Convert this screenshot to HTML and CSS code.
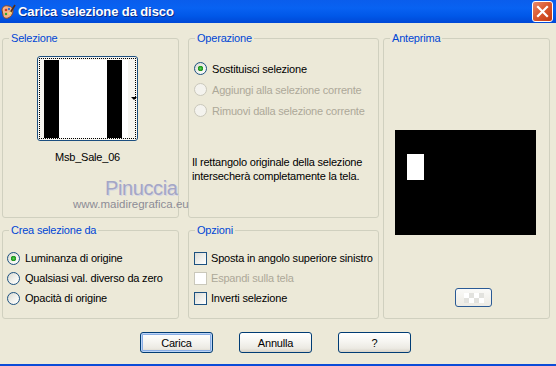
FILE: index.html
```html
<!DOCTYPE html>
<html lang="it">
<head>
    <meta charset="UTF-8">
    <title>Carica selezione da disco</title>
    <link rel="stylesheet" href="styles.css">
</head>
<body>

<div class="window">
    <div class="titlebar">
        <svg class="app-icon" width="16" height="16" viewBox="0 0 16 16">
            <path d="M2 6 C2 3 5 1 8 2 C11 2 13 4 13 7 C13 10 11 13 8 14 C5 15 3 13 3 11 Z" fill="#f2b38a" stroke="#8a4a2a" stroke-width="1"/>
            <circle cx="6" cy="6" r="1.3" fill="#d23b1e"/>
            <circle cx="9" cy="5" r="1.2" fill="#2f6fd6"/>
            <circle cx="6" cy="10" r="1.2" fill="#2da82d"/>
            <path d="M10 9 L15 1" stroke="#5a2d12" stroke-width="1.6"/>
            <path d="M9 10 L11 8" stroke="#f5e06a" stroke-width="2"/>
        </svg>
        <span class="title">Carica selezione da disco</span>
        <span class="close-btn">
            <svg width="13" height="13" viewBox="0 0 13 13">
                <path d="M2 2 L11 11 M11 2 L2 11" stroke="#fff" stroke-width="2.2" stroke-linecap="square"/>
            </svg>
        </span>
    </div>

    <div class="client">
        <div class="groups">
            <fieldset class="group g-sel">
                <legend>Selezione</legend>
                <div class="thumb-btn">
                    <div class="thumb-focus">
                        <div class="thumb-img"></div>
                    </div>
                    <span class="thumb-arrow"></span>
                </div>
                <div class="thumb-name">Msb_Sale_06</div>
            </fieldset>

            <fieldset class="group g-op">
                <legend>Operazione</legend>
                <div class="opt-list">
                    <div class="opt-row"><span class="radio on"></span>Sostituisci selezione</div>
                    <div class="opt-row disabled"><span class="radio"></span>Aggiungi alla selezione corrente</div>
                    <div class="opt-row disabled"><span class="radio"></span>Rimuovi dalla selezione corrente</div>
                </div>
                <p class="note">Il rettangolo originale della selezione intersecherà completamente la tela.</p>
            </fieldset>

            <fieldset class="group g-prev">
                <legend>Anteprima</legend>
                <div class="preview">
                    <span class="preview-sel"></span>
                </div>
                <div class="small-btn"><span class="checker"></span></div>
            </fieldset>

            <fieldset class="group g-crea">
                <legend>Crea selezione da</legend>
                <div class="opt-list tight">
                    <div class="opt-row"><span class="radio on"></span>Luminanza di origine</div>
                    <div class="opt-row"><span class="radio"></span>Qualsiasi val. diverso da zero</div>
                    <div class="opt-row"><span class="radio"></span>Opacità di origine</div>
                </div>
            </fieldset>

            <fieldset class="group g-opz">
                <legend>Opzioni</legend>
                <div class="opt-list tight">
                    <div class="opt-row check"><span class="checkbox"></span>Sposta in angolo superiore sinistro</div>
                    <div class="opt-row check disabled"><span class="checkbox"></span>Espandi sulla tela</div>
                    <div class="opt-row check"><span class="checkbox"></span>Inverti selezione</div>
                </div>
            </fieldset>
        </div>

        <div class="buttons">
            <button class="xp-btn default">Carica</button>
            <button class="xp-btn">Annulla</button>
            <button class="xp-btn">?</button>
        </div>
    </div>

    <div class="watermark">
        <span class="wm-name">Pinuccia</span>
        <span class="wm-url">www.maidiregrafica.eu</span>
    </div>
</div>

</body>
</html>
```

FILE: styles.css
```css
html, body {
    margin: 0;
    padding: 0;
}
body {
    font-family: 'Liberation Sans', Arial, sans-serif;
    font-size: 11px;
    letter-spacing: -0.2px;
    color: #000;
    background: #ECE9D8;
}
.window {
    position: relative;
    height: 366px;
    box-sizing: border-box;
    display: flex;
    flex-direction: column;
    background: #ECE9D8;
    border-bottom: 2px solid #0B4CD8;
    overflow: hidden;
}

/* title bar */
.titlebar {
    height: 23px;
    display: flex;
    align-items: center;
    background: linear-gradient(#0A5DEC 0, #0862F2 35%, #0057E8 70%, #0048D6 100%);
}
.app-icon {
    margin: 0 2px 0 0;
}
.title {
    font-weight: bold;
    font-size: 13px;
    line-height: 23px;
    letter-spacing: -0.1px;
    color: #fff;
    text-shadow: 1px 1px 0 #0A2A8A;
}
.close-btn {
    margin-left: auto;
    margin-right: 3px;
    width: 21px;
    height: 21px;
    box-sizing: border-box;
    border: 1px solid #fff;
    border-radius: 3px;
    background: linear-gradient(135deg, #E98A6C 0, #DB5A32 45%, #C2380F 100%);
    display: flex;
    align-items: center;
    justify-content: center;
}

/* client area */
.client {
    flex: 1;
}
.groups {
    padding: 9px 0 0 2px;
    display: grid;
    grid-template-columns: 186px 195px 167px;
    grid-template-rows: 186px 95px;
    row-gap: 6px;
    grid-template-areas:
        "sel op prev"
        "crea opz prev";
}
.group {
    margin: 0;
    padding: 0;
    min-width: 0;
    border: 1px solid #D0D0BF;
    border-radius: 3px;
    box-sizing: border-box;
}
.group legend {
    margin-left: 6px;
    padding: 0 2px;
    line-height: 12px;
    color: #0046D5;
}
.g-sel  { grid-area: sel;  width: 177px; }
.g-op   { grid-area: op;   width: 191px; }
.g-prev { grid-area: prev; width: 167px; }
.g-crea { grid-area: crea; width: 177px; }
.g-opz  { grid-area: opz;  width: 191px; }

/* selezione */
.thumb-btn {
    position: relative;
    margin: 12px 0 0 34px;
    width: 101px;
    height: 85px;
    box-sizing: border-box;
    border: 1px solid #1C4F80;
    border-radius: 3px;
    padding: 1px;
    background: #F6F5F0;
}
.thumb-focus {
    height: 81px;
    box-sizing: border-box;
    border: 1px dotted #000;
    padding: 1px 0 0 4px;
}
.thumb-img {
    width: 84px;
    height: 78px;
    background: linear-gradient(to right, #000 0, #000 15px, #fff 15px, #fff 63px, #000 63px, #000 78px, #fff 78px);
}
.thumb-arrow {
    position: absolute;
    left: 93px;
    top: 40px;
    border-top: 3px solid #000;
    border-left: 3px solid transparent;
    border-right: 3px solid transparent;
}
.thumb-name {
    margin: 10px 0 0 34px;
    width: 101px;
    text-align: center;
    line-height: 12px;
}

/* option rows */
.opt-list {
    padding: 14px 0 0 5px;
}
.opt-list.tight {
    padding-top: 12px;
}
.g-crea .opt-list {
    padding-left: 4px;
}
.opt-row {
    height: 21px;
    display: flex;
    align-items: center;
    gap: 5px;
    white-space: nowrap;
}
.tight .opt-row {
    height: 20px;
}
.opt-row.check {
    gap: 4px;
}
.opt-row.disabled {
    color: #ACA899;
}
.radio {
    width: 13px;
    height: 13px;
    flex: none;
    box-sizing: border-box;
    border-radius: 50%;
    border: 1px solid #1C5180;
    background: linear-gradient(135deg, #D8D8D0 0, #F2F2EE 55%, #fff 100%);
}
.radio.on {
    background:
        radial-gradient(circle at 50% 50%, #5FCF5B 0, #2DAA2A 1.5px, #1F8E1F 2.5px, transparent 3px),
        linear-gradient(135deg, #D8D8D0 0, #F2F2EE 55%, #fff 100%);
}
.disabled .radio {
    border-color: #CAC8BB;
    background: #F4F3EE;
}
.checkbox {
    width: 13px;
    height: 13px;
    flex: none;
    box-sizing: border-box;
    border: 1px solid #1C5180;
    background: linear-gradient(135deg, #DCDCD7 0, #F0F0EC 55%, #fff 100%);
}
.disabled .checkbox {
    border-color: #CAC8BB;
    background: #fff;
}
.note {
    margin: 34px 0 0 3px;
    line-height: 14px;
}

/* anteprima */
.preview {
    position: relative;
    margin: 86px 0 0 11px;
    width: 141px;
    height: 105px;
    background: #000;
}
.preview-sel {
    position: absolute;
    left: 12px;
    top: 24px;
    width: 17px;
    height: 26px;
    background: #fff;
}
.small-btn {
    margin: 53px 0 0 71px;
    width: 37px;
    height: 19px;
    box-sizing: border-box;
    border: 1px solid #2A5A95;
    border-radius: 3px;
    background: linear-gradient(#FAFAF8, #EDEBE4);
    display: flex;
    align-items: center;
    justify-content: center;
}
.checker {
    width: 20px;
    height: 10px;
    background: repeating-conic-gradient(#E2E2DE 0 25%, #fff 0 50%) 0 0 / 10px 10px;
}

/* buttons */
.buttons {
    margin-top: 13px;
    padding-left: 140px;
    display: flex;
    gap: 26px;
}
.xp-btn {
    width: 73px;
    height: 21px;
    padding: 0;
    font-family: 'Liberation Sans', Arial, sans-serif;
    font-size: 11px;
    letter-spacing: -0.2px;
    color: #000;
    border: 1px solid #003C74;
    border-radius: 3px;
    background: linear-gradient(#FFFFFF 0, #F6F5F1 45%, #ECEAE3 80%, #D8D3C8 100%);
}
.xp-btn.default {
    box-shadow: inset 0 0 0 1px #BCD4F6, inset 0 0 0 2px #89ADE4;
}

/* watermark */
.watermark {
    position: absolute;
    left: 73px;
    top: 178px;
    width: 125px;
    letter-spacing: 0;
}
.wm-name {
    display: block;
    margin-left: 32px;
    font-size: 20px;
    line-height: 20px;
    letter-spacing: -0.4px;
    color: #A4A6C6;
    text-shadow: 1px 1px 0 #D6D6E2;
}
.wm-url {
    display: block;
    font-size: 11.5px;
    line-height: 12px;
    color: #8C8C96;
}
```
